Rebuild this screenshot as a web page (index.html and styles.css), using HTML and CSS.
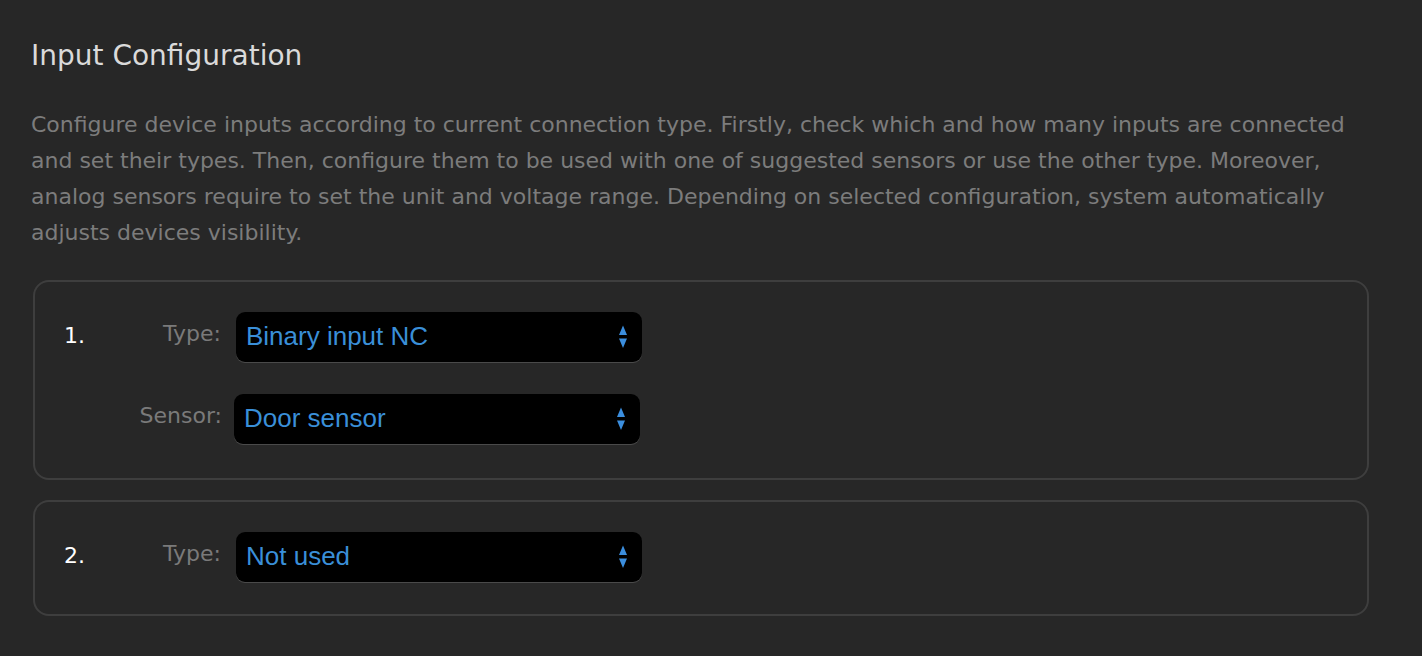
FILE: index.html
```html
<!DOCTYPE html>
<html>
<head>
<meta charset="utf-8">
<link rel="stylesheet" href="styles.css">
</head>
<body>
<div class="page">
  <h1 class="title">Input Configuration</h1>
  <p class="desc">Configure device inputs according to current connection type. Firstly, check which and how many inputs are connected and set their types. Then, configure them to be used with one of suggested sensors or use the other type. Moreover, analog sensors require to set the unit and voltage range. Depending on selected configuration, system automatically adjusts devices visibility.</p>

  <div class="card">
    <div class="row">
      <div class="num">1.</div>
      <div class="label">Type:</div>
      <div class="select">
        <span class="value">Binary input NC</span>
        <svg class="arrows" width="10" height="24" viewBox="0 0 10 24"><path d="M5 0.5 L9 10 L1 10 Z M1 13.5 L9 13.5 L5 23 Z" fill="#3b8ede"/></svg>
      </div>
    </div>
    <div class="row">
      <div class="num"></div>
      <div class="label label-wide">Sensor:</div>
      <div class="select">
        <span class="value">Door sensor</span>
        <svg class="arrows" width="10" height="24" viewBox="0 0 10 24"><path d="M5 0.5 L9 10 L1 10 Z M1 13.5 L9 13.5 L5 23 Z" fill="#3b8ede"/></svg>
      </div>
    </div>
  </div>

  <div class="card">
    <div class="row">
      <div class="num">2.</div>
      <div class="label">Type:</div>
      <div class="select">
        <span class="value">Not used</span>
        <svg class="arrows" width="10" height="24" viewBox="0 0 10 24"><path d="M5 0.5 L9 10 L1 10 Z M1 13.5 L9 13.5 L5 23 Z" fill="#3b8ede"/></svg>
      </div>
    </div>
  </div>
</div>
</body>
</html>
```

FILE: styles.css
```css
html, body {
  margin: 0;
  padding: 0;
  background: #272727;
}

body {
  font-family: "DejaVu Sans", Verdana, sans-serif;
}

.page {
  width: 1338px;
  padding: 39px 0 0 31px;
}

.title {
  margin: 0;
  font-size: 28px;
  line-height: 34px;
  font-weight: normal;
  color: #dadada;
}

.desc {
  margin: 34px 0 0 0;
  font-size: 22px;
  line-height: 36px;
  color: #7c7c7c;
}

.card {
  margin: 29px 0 0 2px;
  border: 2px solid #3e3e3e;
  border-radius: 16px;
  padding: 30px 0 34px 29px;
  display: flex;
  flex-direction: column;
  gap: 32px;
}

.card + .card {
  margin-top: 20px;
  padding-bottom: 32px;
}

.row {
  display: flex;
  align-items: center;
}

.num {
  width: 46px;
  font-size: 22px;
  line-height: 50px;
  color: #ffffff;
  margin-top: -3px;
}

.label {
  width: 111px;
  text-align: right;
  font-size: 22px;
  line-height: 50px;
  color: #7a7a7a;
  margin-right: 15px;
  margin-top: -7px;
}

.label-wide {
  width: 112px;
  margin-right: 12px;
}

.select {
  width: 406px;
  height: 50px;
  box-sizing: border-box;
  background: #000;
  border-radius: 9px;
  box-shadow: 0 1px 0 #4a4a4a;
  display: flex;
  align-items: center;
  justify-content: space-between;
  padding: 0 14px 0 10px;
}

.value {
  font-family: "Liberation Sans", Arial, sans-serif;
  font-size: 26px;
  color: #3a8fd8;
  margin-top: -2px;
}

.arrows {
  display: block;
}
```
